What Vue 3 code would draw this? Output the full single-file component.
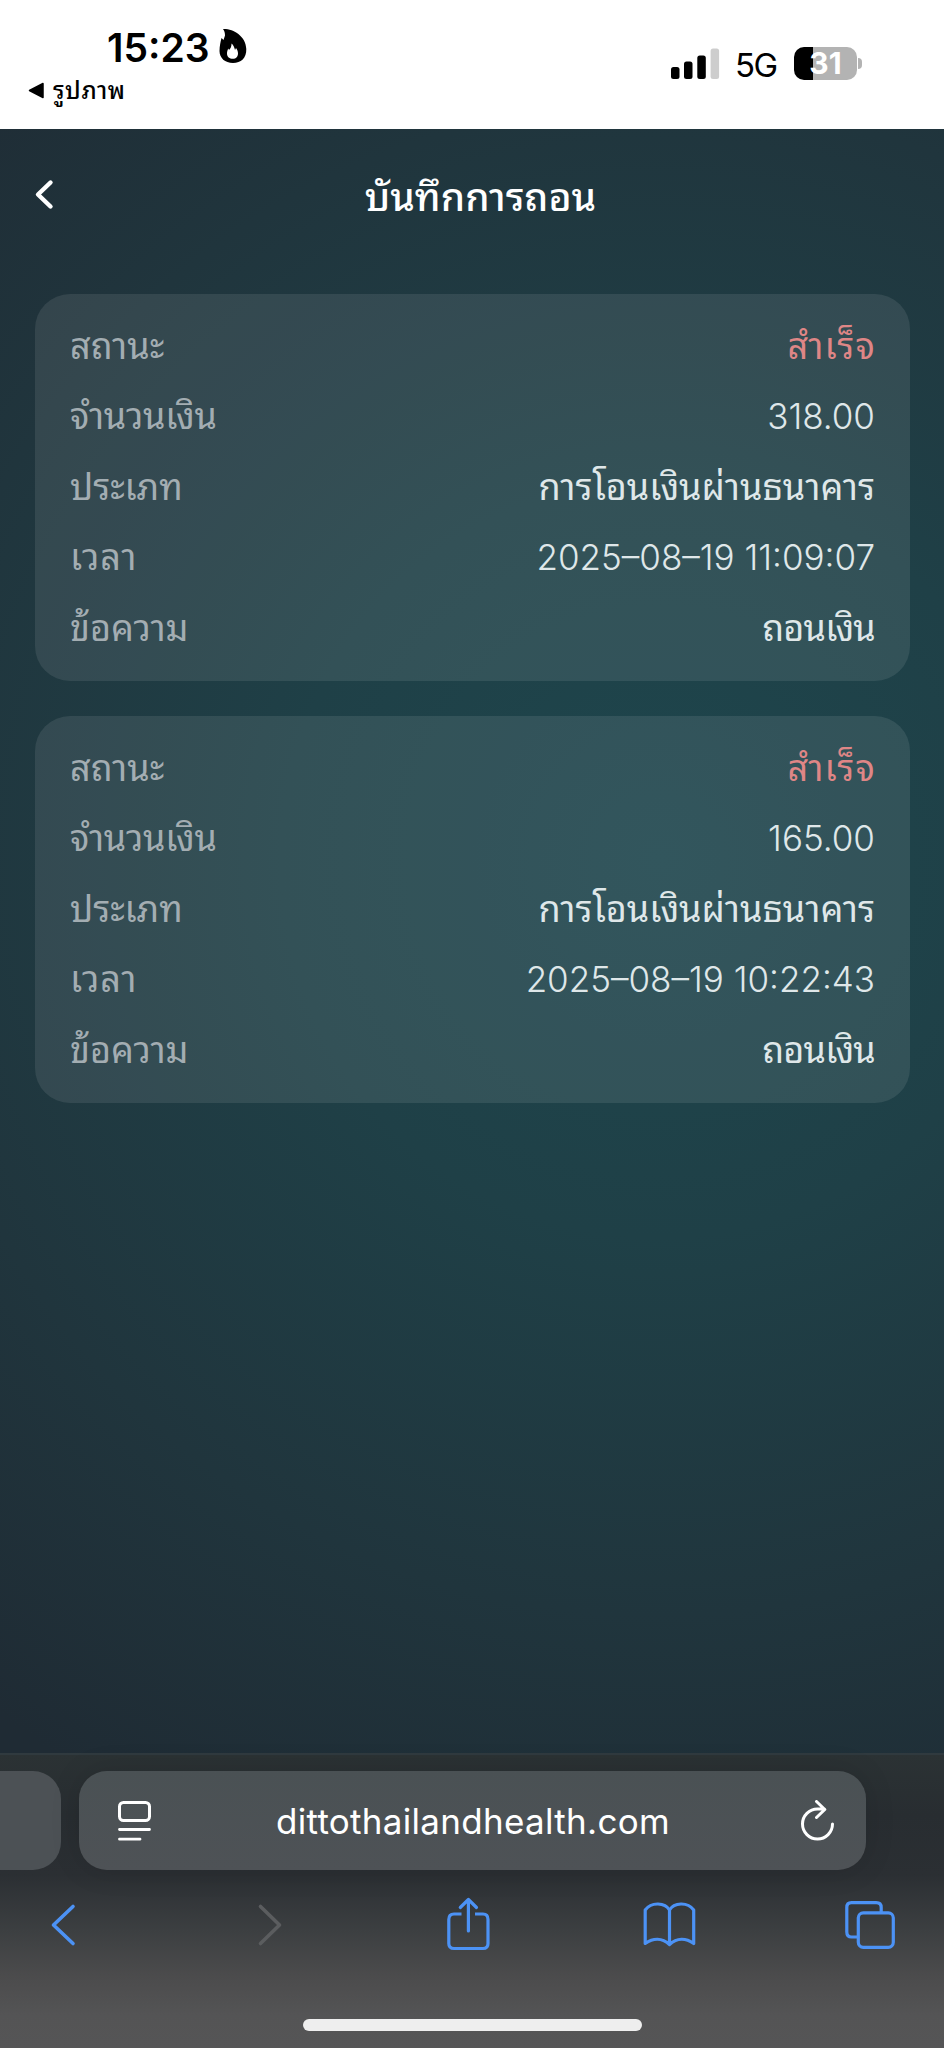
<template>
  <div class="container">

    <div class="estado">
      <div class="estadoizq">
        <div class="hora">
          <span class="horatexto">15:23</span>
          <svg class="fuego" width="28" height="36" viewBox="0 0 28 36">
            <path fill="#000" fill-rule="evenodd" d="M4 1C14 .5 27 8 27.300 21C27.500 30 22 35 14 35C6 35 .5 30 .5 23C.5 18 1.500 14 2.500 10L4.500 12L6 7.500C6 5 5.500 3 4 1ZM12.500 15.500C12.500 19.500 11 21 10 22L9.300 20.500C8.500 22 8 24 8 25.500C8 29 10.500 30.800 13.800 30.800C17.200 30.800 19 28.500 19 25.500C19 23.500 18.200 21.500 17 20L16 22C15.500 19.500 14.500 17 12.500 15.500Z" />
          </svg>
        </div>
        <div class="regresar">
          <svg width="17" height="17" viewBox="0 0 17 17">
            <path d="M1.500 8.500L15 1.500V15.500Z" fill="#000" stroke="#000" stroke-width="1.500" stroke-linejoin="round" />
          </svg>
          <span>รูปภาพ</span>
        </div>
      </div>
      <div class="estadoder">
        <svg width="49" height="32" viewBox="0 0 49 32">
          <rect x="0" y="19" width="8.500" height="12" rx="2.500" />
          <rect x="13" y="13.500" width="8.500" height="17.500" rx="2.500" />
          <rect x="26.300" y="7.500" width="8.500" height="23.500" rx="2.500" />
          <rect x="39.600" y="0.500" width="8.500" height="30.500" rx="2.500" fill="#cdcdcd" />
        </svg>
        <span class="red">5G</span>
        <div class="bateria">31</div>
        <div class="bateriapunta"></div>
      </div>
    </div>

    <div class="pagina">
      <div class="cabecera">
        <svg class="volver" width="22" height="32" viewBox="0 0 22 32">
          <path d="M17.500 4.500L5 16.500L17.500 28.500" fill="none" stroke="#fff" stroke-width="4.400" stroke-linecap="round" stroke-linejoin="round" />
        </svg>
        <p class="titulo">บันทึกการถอน</p>
      </div>

      <div class="registros">
        <div class="registro" v-for="(r,i) in registros" :key="i">
          <div class="fila" v-for="c in campos" :key="c.clave" :class="c.clave">
            <span class="etiqueta">{{ c.nombre }}</span>
            <span class="valor" :class="{'numero':c.numero}">{{ r[c.clave] }}</span>
          </div>
        </div>
      </div>
    </div>

    <div class="navegador">
      <div class="barras">
        <div class="pestana"></div>
        <div class="direccion">
          <svg width="34" height="42" viewBox="0 0 34 42" fill="none" stroke="#fff" stroke-width="3" stroke-linecap="round">
            <rect x="1.500" y="2.500" width="30" height="18" rx="4" />
            <path d="M1.500 29.500H31.500M1.500 39.200H22" stroke-width="2.800" />
          </svg>
          <span class="url">dittothailandhealth.com</span>
          <svg width="36" height="42" viewBox="0 0 36 42" fill="none" stroke="#fff" stroke-width="3" stroke-linecap="round" stroke-linejoin="round">
            <path d="M32.500 24A15 15 0 1 1 17.500 9H24.500M16.500 1.500L24.800 9.500L16.500 17.500" />
          </svg>
        </div>
      </div>

      <div class="botones">
        <svg class="boton" viewBox="0 0 64 64">
          <path d="M41 14.500L21.500 33L41 51.500" stroke-width="3.600" />
        </svg>
        <svg class="boton apagado" viewBox="0 0 64 64">
          <path d="M26.500 14.500L45.500 33L26.500 51.500" stroke-width="3.600" />
        </svg>
        <svg class="boton" viewBox="0 0 64 64">
          <path d="M26.500 22H19Q13.800 22 13.800 27.500V51.500Q13.800 56.500 19 56.500H48Q53 56.500 53 51.500V27.500Q53 22 48 22H40" stroke-linecap="butt" />
          <path d="M33.400 39V7.500M25.300 15.500L33.400 7.500L41.500 15.500" />
        </svg>
        <svg class="boton" viewBox="0 0 64 64">
          <path d="M32.500 18C28 10.500 14.500 9.500 8.200 18V51.500C16 46 25 45.500 32.500 52.500C40 45.500 49 46 56.700 51.500V18C50.500 9.500 37 10.500 32.500 18V52" />
        </svg>
        <svg class="boton" viewBox="0 0 64 64">
          <path d="M43.200 20V15.500Q43.200 10.700 38.200 10.700H13.500Q8.800 10.700 8.800 15.500V40Q8.800 45 13.500 45H19" stroke-linecap="butt" />
          <rect x="20.300" y="20.800" width="35" height="34.500" rx="5" />
        </svg>
      </div>

      <div class="inicio"></div>
    </div>

  </div>
</template>

<script setup>
import { ref } from "vue";

let campos = [
  { clave: "estatus", nombre: "สถานะ" },
  { clave: "monto", nombre: "จำนวนเงิน", numero: true },
  { clave: "tipo", nombre: "ประเภท" },
  { clave: "tiempo", nombre: "เวลา", numero: true },
  { clave: "mensaje", nombre: "ข้อความ" },
];

let registros = ref([
  {
    estatus: "สำเร็จ",
    monto: "318.00",
    tipo: "การโอนเงินผ่านธนาคาร",
    tiempo: "2025–08–19 11:09:07",
    mensaje: "ถอนเงิน",
  },
  {
    estatus: "สำเร็จ",
    monto: "165.00",
    tipo: "การโอนเงินผ่านธนาคาร",
    tiempo: "2025–08–19 10:22:43",
    mensaje: "ถอนเงิน",
  },
]);
</script>

<style>
body{
  margin: 0;
}
</style>

<style scoped>
*{
  box-sizing: border-box;
}

.container{
  width: 944px;
  height: 2048px;
  display: flex;
  flex-direction: column;
  overflow: hidden;
  font-family: Inter, "Noto Sans Thai Looped", "Noto Sans Thai", "Noto Sans", sans-serif;
  white-space: nowrap;
}

.estado{
  height: 129px;
  flex: none;
  display: flex;
  justify-content: space-between;
  background-color: #fff;
  color: #000;
}

.estadoizq{
  padding: 27px 0 0 28px;
}

.hora{
  display: flex;
  height: 40px;
  align-items: center;
  gap: 9px;
  padding-left: 79px;
}

.horatexto{
  font-size: 39px;
  font-weight: 600;
}

.fuego{
  margin-top: -2px;
}

.regresar{
  display: flex;
  align-items: center;
  height: 30px;
  margin-top: 8px;
  gap: 8px;
  font-size: 24px;
  font-weight: 500;
  letter-spacing: 0.6px;
}

.regresar span{
  margin-top: -4px;
}

.estadoder{
  display: flex;
  align-items: center;
  height: 33px;
  margin-top: 47px;
  margin-right: 82px;
}

.red{
  font-size: 33px;
  margin: 2px 0 0 15px;
  width: 43px;
  letter-spacing: -1.5px;
}

.bateria{
  width: 63px;
  height: 33px;
  margin-left: 16px;
  border-radius: 10px;
  background: linear-gradient(90deg, #000 19px, #b3b3b3 19px);
  color: #fff;
  font-size: 30px;
  font-weight: 700;
  line-height: 33px;
  text-align: center;
}

.bateriapunta{
  width: 4px;
  height: 11px;
  margin-left: 1px;
  border-radius: 0 4px 4px 0;
  background-color: #b3b3b3;
}

.pagina{
  height: 1624px;
  flex: none;
  background: radial-gradient(circle 1080px at 660px 730px, #1e464d 0%, #1f4047 35%, #20353d 70%, #1f2b34 100%);
}

.cabecera{
  height: 165px;
  display: flex;
  align-items: flex-start;
  padding-left: 33px;
}

.volver{
  margin-top: 49px;
}

.titulo{
  flex: 1;
  margin: 43px 0 0;
  padding-right: 38px;
  text-align: center;
  font-size: 39px;
  font-weight: 500;
  line-height: 50px;
  color: #fff;
}

.registros{
  display: flex;
  flex-direction: column;
  gap: 35px;
  padding: 0 34px 0 35px;
}

.registro{
  height: 387px;
  padding: 17px 35px;
  border-radius: 35px;
  background-color: rgba(255, 255, 255, 0.09);
}

.fila{
  display: flex;
  justify-content: space-between;
  height: 70.4px;
  line-height: 70.4px;
  font-size: 36px;
  font-weight: 400;
}

.etiqueta{
  color: #a3adb2;
}

.monto .etiqueta{
  letter-spacing: -0.3px;
}

.tiempo .etiqueta{
  letter-spacing: 0.8px;
}

.valor{
  color: #dfe7e9;
}

.numero{
  font-size: 35px;
  font-weight: 300;
  letter-spacing: 0;
}

.estatus .valor{
  color: #df8686;
  letter-spacing: 1.2px;
  margin-right: -1px;
}

.mensaje .valor{
  letter-spacing: -0.8px;
}

.navegador{
  height: 295px;
  flex: none;
  border-top: 2px solid #303a3f;
  background: linear-gradient(#2b3234 0, #282d31 60px, #2b2f33 120px, #3c3f41 175px, #4b4b4c 220px, #545455 260px, #555556 100%);
}

.barras{
  display: flex;
  gap: 18px;
  height: 99px;
  margin-top: 16px;
}

.pestana{
  width: 61px;
  border-radius: 0 28px 28px 0;
  background-color: #4c5155;
}

.direccion{
  width: 787px;
  display: flex;
  align-items: center;
  justify-content: space-between;
  padding: 0 30px 0 39px;
  border-radius: 28px;
  background: linear-gradient(#4a5154, #4e5256);
  box-shadow: 0 0 30px rgba(0, 0, 0, 0.12);
}

.url{
  font-size: 35px;
  color: #fff;
  letter-spacing: 0.3px;
  margin-right: 6px;
}

.botones{
  display: flex;
  justify-content: space-between;
  padding: 0 42px 0 32px;
  margin-top: 22px;
}

.boton{
  width: 64px;
  height: 64px;
  fill: none;
  stroke: #4c92f5;
  stroke-width: 3.200;
  stroke-linecap: round;
  stroke-linejoin: round;
}

.apagado{
  stroke: #5b5d5f;
}

.inicio{
  width: 339px;
  height: 12px;
  margin: 63px 0 0 303px;
  border-radius: 6px;
  background-color: #eee;
}
</style>
